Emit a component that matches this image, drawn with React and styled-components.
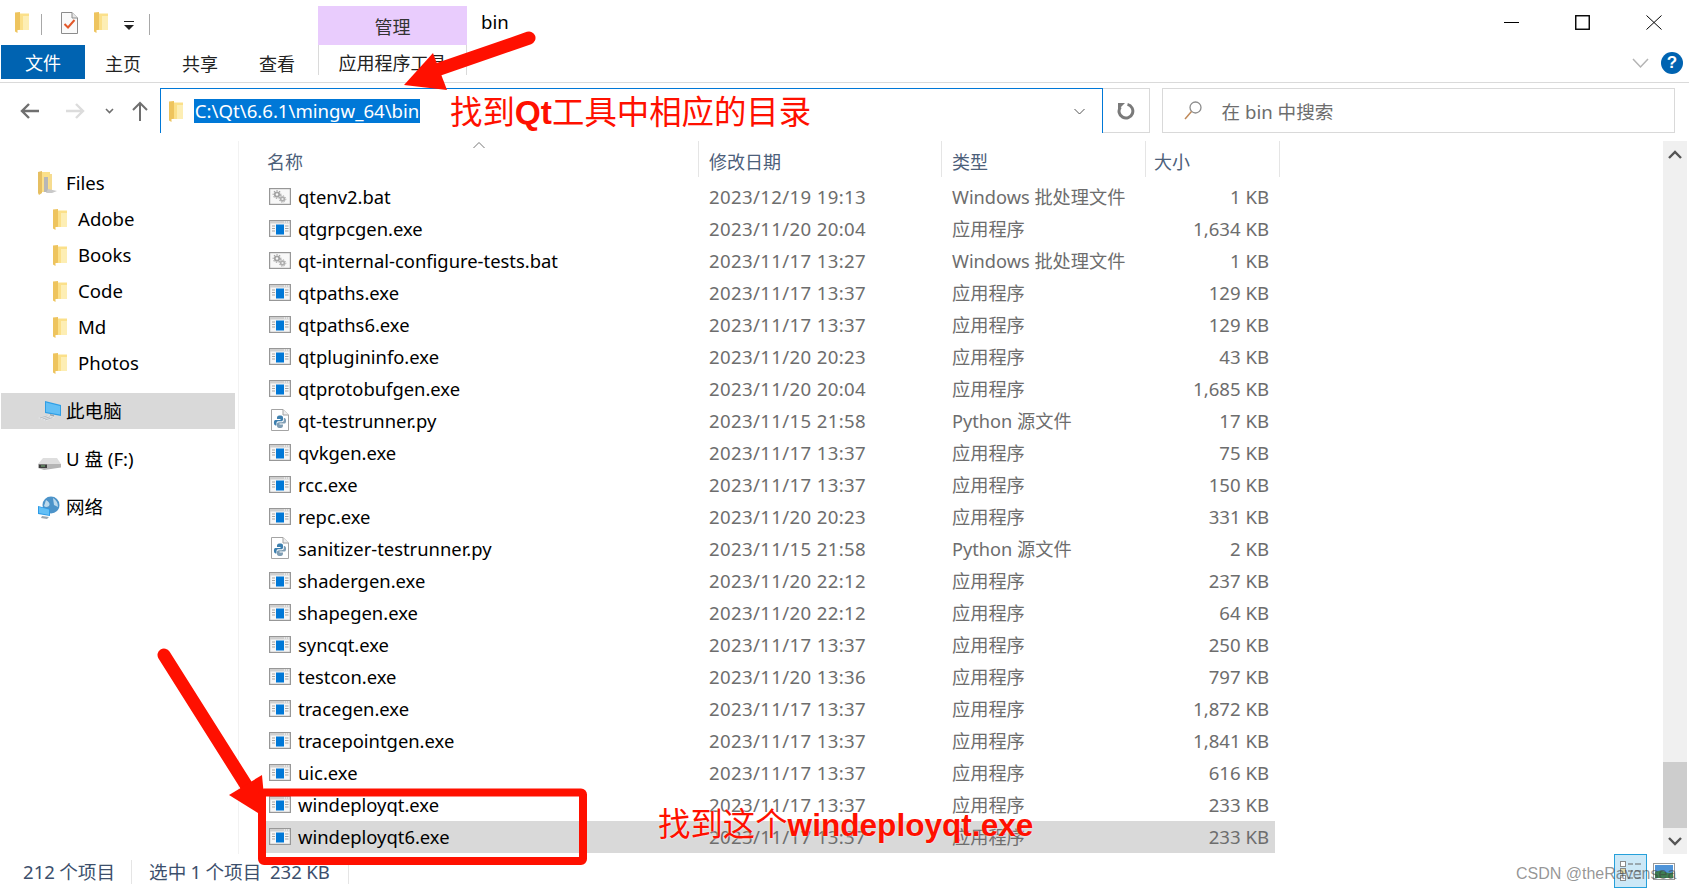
import React from "react";
import styled, { createGlobalStyle } from "styled-components";

const GlobalStyle = createGlobalStyle`
    html, body {
        margin: 0;
        padding: 0;
        background: #fff;
        overflow: hidden;
    }
    * {
        box-sizing: border-box;
    }
`;

const rows = [
    ["qtenv2.bat", "2023/12/19 19:13", "Windows 批处理文件", "1 KB", "bat"],
    ["qtgrpcgen.exe", "2023/11/20 20:04", "应用程序", "1,634 KB", "exe"],
    ["qt-internal-configure-tests.bat", "2023/11/17 13:27", "Windows 批处理文件", "1 KB", "bat"],
    ["qtpaths.exe", "2023/11/17 13:37", "应用程序", "129 KB", "exe"],
    ["qtpaths6.exe", "2023/11/17 13:37", "应用程序", "129 KB", "exe"],
    ["qtplugininfo.exe", "2023/11/20 20:23", "应用程序", "43 KB", "exe"],
    ["qtprotobufgen.exe", "2023/11/20 20:04", "应用程序", "1,685 KB", "exe"],
    ["qt-testrunner.py", "2023/11/15 21:58", "Python 源文件", "17 KB", "py"],
    ["qvkgen.exe", "2023/11/17 13:37", "应用程序", "75 KB", "exe"],
    ["rcc.exe", "2023/11/17 13:37", "应用程序", "150 KB", "exe"],
    ["repc.exe", "2023/11/20 20:23", "应用程序", "331 KB", "exe"],
    ["sanitizer-testrunner.py", "2023/11/15 21:58", "Python 源文件", "2 KB", "py"],
    ["shadergen.exe", "2023/11/20 22:12", "应用程序", "237 KB", "exe"],
    ["shapegen.exe", "2023/11/20 22:12", "应用程序", "64 KB", "exe"],
    ["syncqt.exe", "2023/11/17 13:37", "应用程序", "250 KB", "exe"],
    ["testcon.exe", "2023/11/20 13:36", "应用程序", "797 KB", "exe"],
    ["tracegen.exe", "2023/11/17 13:37", "应用程序", "1,872 KB", "exe"],
    ["tracepointgen.exe", "2023/11/17 13:37", "应用程序", "1,841 KB", "exe"],
    ["uic.exe", "2023/11/17 13:37", "应用程序", "616 KB", "exe"],
    ["windeployqt.exe", "2023/11/17 13:37", "应用程序", "233 KB", "exe"],
    ["windeployqt6.exe", "2023/11/17 13:37", "应用程序", "233 KB", "exe", true],
];

const FolderIcon = () => (
    <svg width="14" height="21" viewBox="0 0 14 21">
        <path d="M4 1.5 H14 V18 H4 Z" fill="#fbe08a" />
        <path d="M8 4 H14 V18 H8 Z" fill="#fdeeb4" />
        <path d="M0 0.5 L5 0 V17.5 L4 18 L2.5 18 V21 L0 19.5 Z" fill="#eec45e" />
    </svg>
);

const FilesIcon = () => (
    <svg width="20" height="24" viewBox="0 0 20 24">
        <path d="M3 1 H12 V21 H3 Z" fill="#fbe08a" />
        <path d="M0 1 L4 0 V22 L1 24 L0 22 Z" fill="#e6bf62" />
        <path d="M6 6 H10 V21 H6 Z" fill="#b7b7b7" />
        <path d="M11 3 H14 V20 H11 Z" fill="#f6dc90" />
        <path d="M10 18 L19 20 L14 22 H8 Z" fill="#c9c9c9" />
    </svg>
);

const ExeIcon = () => (
    <svg width="22" height="17" viewBox="0 0 22 17">
        <rect x="0.6" y="0.6" width="20.8" height="15.8" fill="#f6f6f6" stroke="#979797" strokeWidth="1.2" />
        <rect x="1" y="1" width="20" height="2.5" fill="#cfcfcf" />
        <path d="M15 2 H16 M17 2 H18 M19 2 H20" stroke="#fff" />
        <rect x="7" y="4.5" width="8" height="10" fill="#0078d7" />
        <path d="M3 6 H6 M3 8.5 H6 M3 11 H6 M16 6 H19.5 M16 8.5 H19.5 M16 11 H19.5" stroke="#a5a5a5" />
    </svg>
);

const BatIcon = () => (
    <svg width="22" height="17" viewBox="0 0 22 17">
        <rect x="0.6" y="0.6" width="20.8" height="15.8" fill="#f8f8f8" stroke="#979797" strokeWidth="1.2" />
        <circle cx="8" cy="6.5" r="2.2" fill="none" stroke="#a3a3a3" strokeWidth="1.8" />
        <circle cx="8" cy="6.5" r="3.8" fill="none" stroke="#a3a3a3" strokeWidth="1.1" strokeDasharray="1.4 1.4" />
        <circle cx="13.5" cy="11" r="1.9" fill="#eee" stroke="#adadad" strokeWidth="1.6" />
        <circle cx="13.5" cy="11" r="3.3" fill="none" stroke="#adadad" strokeWidth="1" strokeDasharray="1.3 1.3" />
    </svg>
);

const PyIcon = () => (
    <svg width="22" height="22" viewBox="0 0 22 22">
        <path d="M2.5 0.5 H14 L19.5 6 V21.5 H2.5 Z" fill="#fff" stroke="#a4a4a4" />
        <path d="M14 0.5 V6 H19.5" fill="#eee" stroke="#a4a4a4" />
        <path d="M11 6.5 C8 6.5 8 8 8 10 H11.5 V11 H6.5 C5 11 4.8 13 5 14.5 C5.2 16 6 16.5 7.5 16.5 V14 C7.5 12.8 8.5 12.3 9.5 12.3 H12 C13.3 12.3 14 11.5 14 10.5 V8.5 C14 7 12.8 6.5 11 6.5 Z" fill="#3d7fae" />
        <path d="M11 19 C14 19 14 17.5 14 15.5 H10.5 V14.5 H15.5 C17 14.5 17.2 12.5 17 11 C16.8 9.5 16 9 14.8 9 V11.5 C14.8 12.7 13.5 13.2 12.5 13.2 H10 C8.7 13.2 8 14 8 15 V17 C8 18.5 9.2 19 11 19 Z" fill="#7f9db3" />
    </svg>
);

const fileIcons = { exe: ExeIcon, bat: BatIcon, py: PyIcon };

const ComputerIcon = () => (
    <svg width="24" height="20" viewBox="0 0 24 20">
        <path d="M7 0 L23 4 V15 L7 12 Z" fill="#2f9fe6" />
        <path d="M8 1.5 L22 5 V13.5 L8 11 Z" fill="#63bff5" />
        <path d="M12 13 L16 14 L16 15.5 L12 14.5 Z" fill="#9aa7b0" />
        <path d="M0 17 L9 14 L17 16.5 L8 20 Z" fill="#e4e6e8" />
        <path d="M2 17 L9.5 14.8 M4.5 18 L12 15.8 M7 19 L14.5 16.6" stroke="#b9bdc2" />
    </svg>
);

const DriveIcon = () => (
    <svg width="23" height="12" viewBox="0 0 23 12">
        <path d="M5 0 H19 L23 6 H0 Z" fill="#dedede" />
        <path d="M0 6 H23 V9.5 L6 12 L0 10 Z" fill="#b5b5b5" />
        <path d="M1 6.5 H9 V10 H1 Z" fill="#3d3d3d" />
        <path d="M3 8 H7" stroke="#7bb87b" />
    </svg>
);

const NetworkIcon = () => (
    <svg width="22" height="23" viewBox="0 0 22 23">
        <circle cx="13" cy="9" r="8.5" fill="#4c93c9" />
        <path d="M8 4 Q13 7 11 10 Q8 12 6 10 Z M15 2 Q20 5 20 11 L16 9 Z" fill="#bcd9ec" />
        <path d="M0 10 L12 13 V20 L0 18 Z" fill="#2b9be8" />
        <path d="M1 11 L11 13.5 V19 L1 17 Z" fill="#63bff5" />
        <path d="M4 20 L11 21 L9 23 L3 22 Z" fill="#9aa7b0" />
    </svg>
);

const CheckDocIcon = () => (
    <svg width="17" height="22" viewBox="0 0 17 22">
        <path d="M0.5 0.5 H11 L16.5 6 V21.5 H0.5 Z" fill="#fafafa" stroke="#8c8c8c" />
        <path d="M11 0.5 V6 H16.5" fill="#e8e8e8" stroke="#8c8c8c" />
        <path d="M3.5 12 L7 15.5 L13.5 8" fill="none" stroke="#e2582a" strokeWidth="2" />
    </svg>
);

const Page = styled.div`
    position: relative;
    width: 1689px;
    height: 890px;
    overflow: hidden;
    display: flex;
    flex-direction: column;
    background: #fff;
    color: #000;
    font-family: "Noto Sans", "Noto Sans CJK SC", sans-serif;
    font-size: 18.6px;
`;

const TitleBar = styled.div`
    height: 45px;
    display: flex;
    align-items: flex-end;
    font-size: 18px;
`;

const QuickAccess = styled.div`
    width: 318px;
    height: 45px;
    padding: 12px 0 0 15px;
    display: flex;
    align-items: flex-start;
`;

const QuickSep = styled.div`
    width: 1px;
    height: 21px;
    margin: 2px ${(p) => p.$right}px 0 ${(p) => p.$left}px;
    background: #a8a8a8;
`;

const QuickGap = styled.div`
    width: 16px;
`;

const DropGlyph = styled.div`
    width: 10px;
    height: 10px;
    margin: 9px 0 0 16px;
    border-top: 1px solid #222;
    position: relative;
    &::after {
        content: "";
        position: absolute;
        left: 0;
        top: 3px;
        border-left: 5px solid transparent;
        border-right: 5px solid transparent;
        border-top: 5px solid #222;
    }
`;

const ManageTab = styled.div`
    width: 149px;
    height: 39px;
    background: #e9ccfd;
    color: #333;
    display: flex;
    align-items: center;
    justify-content: center;
`;

const WindowName = styled.div`
    align-self: flex-start;
    margin: 10px 0 0 14px;
    font-size: 18.6px;
    line-height: 24px;
`;

const WindowButtons = styled.div`
    margin-left: auto;
    height: 45px;
    padding: 15px 27px 0 0;
    display: flex;
    gap: 56px;
`;

const RibbonRow = styled.div`
    height: 38px;
    border-bottom: 1px solid #dadada;
    padding-left: 1px;
    display: flex;
    align-items: flex-start;
    font-size: 18px;
`;

const FileTab = styled.div`
    width: 84px;
    height: 34px;
    margin-right: 20px;
    background: #0063b1;
    color: #fff;
    display: flex;
    align-items: center;
    justify-content: center;
`;

const RibbonTab = styled.div`
    width: 36px;
    height: 35px;
    margin-right: 41px;
    color: #222;
    display: flex;
    align-items: center;
    justify-content: center;
    white-space: nowrap;
`;

const ToolTab = styled.div`
    width: 149px;
    height: 30px;
    margin-left: -18px;
    border-left: 1px solid #dadada;
    border-right: 1px solid #dadada;
    color: #222;
    padding-top: 5px;
    line-height: 26px;
    text-align: center;
`;

const RibbonEnd = styled.div`
    margin-left: auto;
    padding: 7px 6px 0 0;
    display: flex;
    align-items: flex-start;
    gap: 12px;
`;

const HelpBadge = styled.div`
    width: 22px;
    height: 22px;
    border-radius: 50%;
    background: #0063b1;
    color: #fff;
    font-family: "Liberation Sans", sans-serif;
    font-weight: 700;
    font-size: 17px;
    line-height: 22px;
    text-align: center;
`;

const AddressRow = styled.div`
    height: 58px;
    padding: 5px 14px 8px 0;
    display: flex;
`;

const NavButtons = styled.div`
    width: 160px;
    padding-left: 20px;
    display: flex;
    align-items: center;
`;

const NavButton = styled.div`
    width: ${(p) => p.$width}px;
    margin-right: ${(p) => p.$gap}px;
    display: flex;
    align-items: center;
`;

const AddressBox = styled.div`
    width: 944px;
    border: 1px solid #0078d7;
    border-bottom: 0;
    padding: 0 17px 0 8px;
    display: flex;
    align-items: center;
`;

const PathText = styled.span`
    margin-left: 11px;
    background: #0078d7;
    color: #fff;
    height: 24px;
    line-height: 24px;
    padding: 0 1px;
    white-space: nowrap;
`;

const AddressCaret = styled.div`
    margin-left: auto;
    display: flex;
`;

const RefreshBox = styled.div`
    width: 47px;
    border: 1px solid #d9d9d9;
    border-left: 0;
    display: flex;
    align-items: center;
    justify-content: center;
`;

const SearchBox = styled.div`
    width: 514px;
    margin-left: 12px;
    border: 1px solid #d9d9d9;
    padding-left: 21px;
    padding-bottom: 1px;
    display: flex;
    align-items: center;
    gap: 20px;
    color: #6d6d6d;
`;

const Main = styled.div`
    flex: 1;
    min-height: 0;
    display: flex;
`;

const Sidebar = styled.div`
    width: 239px;
    flex: none;
    padding: 24px 0 0 1px;
    border-right: 1px solid #f2f2f2;
    display: flex;
    flex-direction: column;
`;

const NavItem = styled.div`
    width: 234px;
    height: 36px;
    margin-bottom: ${(p) => (p.$spaced ? 12 : 0)}px;
    padding-left: ${(p) => (p.$child ? 52 : 37)}px;
    background: ${(p) => (p.$active ? "#d9d9d9" : "transparent")};
    display: flex;
    align-items: center;
`;

const NavIconSlot = styled.div`
    width: ${(p) => (p.$child ? 25 : 28)}px;
    flex: none;
    display: flex;
    align-items: center;
`;

const NavLabel = styled.span`
    margin-top: ${(p) => (p.$cjk ? -4 : -2)}px;
`;

const DriveSlot = styled(NavIconSlot)`
    padding-top: 10px;
`;

const ListPane = styled.div`
    flex: 1;
    min-width: 0;
`;

const ListHeader = styled.div`
    height: 40px;
    margin-left: 17px;
    display: grid;
    grid-template-columns: 443px 243px 204px 134px;
    width: 1024px;
`;

const HeaderCell = styled.div`
    position: relative;
    height: 36px;
    padding: 8px 0 0 ${(p) => p.$pad}px;
    border-right: 1px solid #e5e5e5;
    color: #4c607a;
    font-size: 18px;
    line-height: 26px;
`;

const SortCaret = styled.div`
    position: absolute;
    left: 217px;
    top: 0;
    display: flex;
`;

const FileRow = styled.div`
    width: 1009px;
    height: 32px;
    margin-left: 27px;
    padding: 0 6px 2px 3px;
    background: ${(p) => (p.$selected ? "#d9d9d9" : "transparent")};
    display: grid;
    grid-template-columns: 440px 243px 190px 1fr;
    align-items: center;
    white-space: nowrap;
`;

const FileName = styled.div`
    display: flex;
    align-items: center;
    font-size: 18.4px;
`;

const FileIconSlot = styled.div`
    width: 29px;
    flex: none;
    display: flex;
    align-items: center;
`;

const DateCell = styled.div`
    color: #6d6d6d;
    letter-spacing: 0.36px;
`;

const TypeCell = styled.div`
    color: #6d6d6d;
    font-size: 18.2px;
`;

const SizeCell = styled.div`
    color: #6d6d6d;
    text-align: right;
`;

const Scrollbar = styled.div`
    width: 24px;
    flex: none;
    margin-right: 2px;
    background: #f0f0f0;
    display: flex;
    flex-direction: column;
`;

const ScrollButton = styled.div`
    height: 26px;
    flex: none;
    display: flex;
    align-items: center;
    justify-content: center;
`;

const ScrollTrack = styled.div`
    flex: 1;
    display: flex;
    flex-direction: column;
    justify-content: flex-end;
`;

const ScrollThumb = styled.div`
    height: 66px;
    background: #cdcdcd;
`;

const StatusBar = styled.div`
    height: 36px;
    flex: none;
    padding-left: 23px;
    display: flex;
    align-items: center;
    color: #3c4f6c;
`;

const StatusText = styled.span`
    margin-top: -4px;
    white-space: pre;
    word-spacing: -0.5px;
`;

const StatusSep = styled.div`
    width: 1px;
    height: 24px;
    background: #e5e5e5;
    margin: 0 ${(p) => p.$right}px 0 ${(p) => p.$left}px;
`;

const ViewButtons = styled.div`
    margin-left: auto;
    height: 36px;
    padding-right: 14px;
    display: flex;
    align-items: flex-start;
    gap: 6px;
`;

const ViewDetails = styled.div`
    width: 33px;
    height: 34px;
    background: #cce8f7;
    border: 1px solid #26a0da;
    display: flex;
    align-items: center;
    justify-content: center;
`;

const ViewThumb = styled.div`
    margin-top: 9px;
    display: flex;
`;

const Overlay = styled.svg`
    position: absolute;
    left: 0;
    top: 0;
    pointer-events: none;
`;

const Callout = styled.div`
    position: absolute;
    left: ${(p) => p.$left}px;
    top: ${(p) => p.$top}px;
    color: #ff1000;
    font-size: 32.4px;
    line-height: 40px;
    white-space: nowrap;
    text-shadow: 0 0 2px #fff;
`;

const CalloutBold = styled.b`
    font-family: "Liberation Sans", sans-serif;
    font-weight: 700;
    font-size: ${(p) => p.$size}px;
`;

const Watermark = styled.div`
    position: absolute;
    left: 1516px;
    top: 864px;
    font-family: "Liberation Sans", sans-serif;
    font-size: 16px;
    line-height: 20px;
    color: rgba(60, 60, 60, 0.55);
    white-space: nowrap;
`;

const App = () => {
    return (
        <Page>
            <GlobalStyle />
            <TitleBar>
                <QuickAccess>
                    <FolderIcon />
                    <QuickSep $left={12} $right={19} />
                    <CheckDocIcon />
                    <QuickGap />
                    <FolderIcon />
                    <DropGlyph />
                    <QuickSep $left={15} $right={0} />
                </QuickAccess>
                <ManageTab>管理</ManageTab>
                <WindowName>bin</WindowName>
                <WindowButtons>
                    <svg width="15" height="15" viewBox="0 0 15 15">
                        <path d="M0 7.5 H15" stroke="#000" />
                    </svg>
                    <svg width="15" height="15" viewBox="0 0 15 15">
                        <rect x="0.75" y="0.75" width="13.5" height="13.5" fill="none" stroke="#000" strokeWidth="1.4" />
                    </svg>
                    <svg width="16" height="15" viewBox="0 0 16 15">
                        <path d="M0.5 0.5 L15.5 14.5 M15.5 0.5 L0.5 14.5" stroke="#000" />
                    </svg>
                </WindowButtons>
            </TitleBar>

            <RibbonRow>
                <FileTab>文件</FileTab>
                <RibbonTab>主页</RibbonTab>
                <RibbonTab>共享</RibbonTab>
                <RibbonTab>查看</RibbonTab>
                <ToolTab>应用程序工具</ToolTab>
                <RibbonEnd>
                    <svg width="17" height="22" viewBox="0 0 17 22">
                        <path d="M1 7 L8.5 15 L16 7" fill="none" stroke="#b4b4b4" strokeWidth="1.5" />
                    </svg>
                    <HelpBadge>?</HelpBadge>
                </RibbonEnd>
            </RibbonRow>

            <AddressRow>
                <NavButtons>
                    <NavButton $width={19} $gap={27}>
                        <svg width="19" height="16" viewBox="0 0 19 16">
                            <path d="M19 8 H2 M9 1 L2 8 L9 15" fill="none" stroke="#6f6f6f" strokeWidth="2.4" />
                        </svg>
                    </NavButton>
                    <NavButton $width={19} $gap={20}>
                        <svg width="19" height="16" viewBox="0 0 19 16">
                            <path d="M0 8 H17 M10 1 L17 8 L10 15" fill="none" stroke="#dcdcdc" strokeWidth="2.4" />
                        </svg>
                    </NavButton>
                    <NavButton $width={9} $gap={18}>
                        <svg width="9" height="6" viewBox="0 0 9 6">
                            <path d="M1 1 L4.5 4.5 L8 1" fill="none" stroke="#6f6f6f" strokeWidth="1.6" />
                        </svg>
                    </NavButton>
                    <NavButton $width={16} $gap={0}>
                        <svg width="16" height="20" viewBox="0 0 16 20">
                            <path d="M8 20 V2 M1 9 L8 2 L15 9" fill="none" stroke="#6f6f6f" strokeWidth="2" />
                        </svg>
                    </NavButton>
                </NavButtons>
                <AddressBox>
                    <FolderIcon />
                    <PathText>C:\Qt\6.6.1\mingw_64\bin</PathText>
                    <AddressCaret>
                        <svg width="11" height="7" viewBox="0 0 11 7">
                            <path d="M0.5 1 L5.5 6 L10.5 1" fill="none" stroke="#555" />
                        </svg>
                    </AddressCaret>
                </AddressBox>
                <RefreshBox>
                    <svg width="18" height="18" viewBox="0 0 18 18">
                        <path d="M10.5 2.4 A6.9 6.9 0 1 1 3.4 5" fill="none" stroke="#7a7a7a" strokeWidth="3" />
                        <path d="M1 1 H8 L1 8 Z" fill="#7a7a7a" />
                    </svg>
                </RefreshBox>
                <SearchBox>
                    <svg width="18" height="19" viewBox="0 0 18 19">
                        <circle cx="11.5" cy="6.5" r="5.5" fill="none" stroke="#8d8d8d" strokeWidth="1.3" />
                        <path d="M7.5 10.5 L1 18" stroke="#c08a5a" strokeWidth="1.5" />
                    </svg>
                    在 bin 中搜索
                </SearchBox>
            </AddressRow>

            <Main>
                <Sidebar>
                    <NavItem>
                        <NavIconSlot>
                            <FilesIcon />
                        </NavIconSlot>
                        <NavLabel>Files</NavLabel>
                    </NavItem>
                    {["Adobe", "Books", "Code", "Md"].map((name) => (
                        <NavItem key={name} $child>
                            <NavIconSlot $child>
                                <FolderIcon />
                            </NavIconSlot>
                            <NavLabel>{name}</NavLabel>
                        </NavItem>
                    ))}
                    <NavItem $child $spaced>
                        <NavIconSlot $child>
                            <FolderIcon />
                        </NavIconSlot>
                        <NavLabel>Photos</NavLabel>
                    </NavItem>
                    <NavItem $active $spaced>
                        <NavIconSlot>
                            <ComputerIcon />
                        </NavIconSlot>
                        <NavLabel $cjk>此电脑</NavLabel>
                    </NavItem>
                    <NavItem $spaced>
                        <DriveSlot>
                            <DriveIcon />
                        </DriveSlot>
                        <NavLabel $cjk>U 盘 (F:)</NavLabel>
                    </NavItem>
                    <NavItem>
                        <NavIconSlot>
                            <NetworkIcon />
                        </NavIconSlot>
                        <NavLabel $cjk>网络</NavLabel>
                    </NavItem>
                </Sidebar>

                <ListPane>
                    <ListHeader>
                        <HeaderCell $pad={11}>
                            名称
                            <SortCaret>
                                <svg width="12" height="8" viewBox="0 0 12 8">
                                    <path d="M0.5 7 L6 1.5 L11.5 7" fill="none" stroke="#777" />
                                </svg>
                            </SortCaret>
                        </HeaderCell>
                        <HeaderCell $pad={10}>修改日期</HeaderCell>
                        <HeaderCell $pad={10}>类型</HeaderCell>
                        <HeaderCell $pad={8}>大小</HeaderCell>
                    </ListHeader>
                    {rows.map(([name, date, type, size, kind, selected]) => {
                        const Icon = fileIcons[kind];
                        return (
                            <FileRow key={name} $selected={selected}>
                                <FileName>
                                    <FileIconSlot>
                                        <Icon />
                                    </FileIconSlot>
                                    {name}
                                </FileName>
                                <DateCell>{date}</DateCell>
                                <TypeCell>{type}</TypeCell>
                                <SizeCell>{size}</SizeCell>
                            </FileRow>
                        );
                    })}
                </ListPane>

                <Scrollbar>
                    <ScrollButton>
                        <svg width="14" height="9" viewBox="0 0 14 9">
                            <path d="M1 8 L7 2 L13 8" fill="none" stroke="#555" strokeWidth="2.4" />
                        </svg>
                    </ScrollButton>
                    <ScrollTrack>
                        <ScrollThumb />
                    </ScrollTrack>
                    <ScrollButton>
                        <svg width="14" height="9" viewBox="0 0 14 9">
                            <path d="M1 1 L7 7 L13 1" fill="none" stroke="#555" strokeWidth="2.4" />
                        </svg>
                    </ScrollButton>
                </Scrollbar>
            </Main>

            <StatusBar>
                <StatusText>212 个项目</StatusText>
                <StatusSep $left={16} $right={17} />
                <StatusText>选中 1 个项目  232 KB</StatusText>
                <StatusSep $left={18} $right={0} />
                <ViewButtons>
                    <ViewDetails>
                        <svg width="22" height="20" viewBox="0 0 22 20">
                            <rect x="0.5" y="0.5" width="5" height="5" fill="#fff" stroke="#8a8a8a" />
                            <rect x="0.5" y="7.5" width="5" height="5" fill="#e4d9a8" stroke="#8a8a8a" />
                            <rect x="0.5" y="14.5" width="5" height="5" fill="#fff" stroke="#8a8a8a" />
                            <path d="M8 3 H13 M15 3 H21 M8 10 H13 M15 10 H21 M8 17 H13 M15 17 H21" stroke="#666" />
                        </svg>
                    </ViewDetails>
                    <ViewThumb>
                        <svg width="22" height="17" viewBox="0 0 22 17">
                            <rect x="0.5" y="0.5" width="21" height="16" fill="#fff" stroke="#9a9a9a" />
                            <rect x="2" y="2" width="18" height="13" fill="#4f94d8" />
                            <path d="M2 15 V9 Q8 6 12 9 Q17 11 20 9 V15 Z" fill="#3f7f52" />
                        </svg>
                    </ViewThumb>
                </ViewButtons>
            </StatusBar>

            <Overlay width="1689" height="890" viewBox="0 0 1689 890">
                <path d="M529 38 L425 74" stroke="#ff1000" strokeWidth="13" strokeLinecap="round" />
                <path d="M404 85 L433 53 L447 90 Z" fill="#ff1000" />
                <path d="M164 655 L246 785" stroke="#ff1000" strokeWidth="13" strokeLinecap="round" />
                <path d="M266 818 L262 775 L229 795 Z" fill="#ff1000" />
                <rect x="262" y="792.5" width="321" height="68.5" rx="2" fill="none" stroke="#ff1000" strokeWidth="8" />
            </Overlay>
            <Callout $left={450} $top={91}>
                找到<CalloutBold $size={33.5}>Qt</CalloutBold>工具中相应的目录
            </Callout>
            <Callout $left={658} $top={803}>
                找到这个<CalloutBold $size={31.6}>windeployqt.exe</CalloutBold>
            </Callout>
            <Watermark>CSDN @theRavensea</Watermark>
        </Page>
    );
};

export default App;
